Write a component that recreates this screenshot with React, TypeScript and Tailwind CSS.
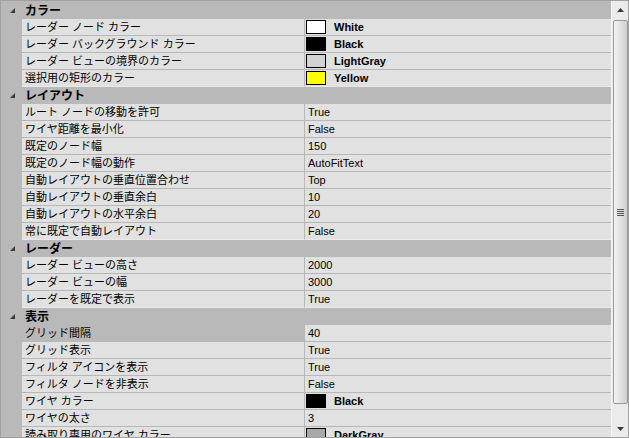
import React from 'react';

type Val = string | { color: string; label: string };
type Row = { name: string; value: Val; selected?: boolean };
type Section = { title: string; rows: Row[] };

const sections: Section[] = [
  {
    title: 'カラー',
    rows: [
      { name: 'レーダー ノード カラー', value: { color: '#ffffff', label: 'White' } },
      { name: 'レーダー バックグラウンド カラー', value: { color: '#000000', label: 'Black' } },
      { name: 'レーダー ビューの境界のカラー', value: { color: '#d3d3d3', label: 'LightGray' } },
      { name: '選択用の矩形のカラー', value: { color: '#ffff00', label: 'Yellow' } },
    ],
  },
  {
    title: 'レイアウト',
    rows: [
      { name: 'ルート ノードの移動を許可', value: 'True' },
      { name: 'ワイヤ距離を最小化', value: 'False' },
      { name: '既定のノード幅', value: '150' },
      { name: '既定のノード幅の動作', value: 'AutoFitText' },
      { name: '自動レイアウトの垂直位置合わせ', value: 'Top' },
      { name: '自動レイアウトの垂直余白', value: '10' },
      { name: '自動レイアウトの水平余白', value: '20' },
      { name: '常に既定で自動レイアウト', value: 'False' },
    ],
  },
  {
    title: 'レーダー',
    rows: [
      { name: 'レーダー ビューの高さ', value: '2000' },
      { name: 'レーダー ビューの幅', value: '3000' },
      { name: 'レーダーを既定で表示', value: 'True' },
    ],
  },
  {
    title: '表示',
    rows: [
      { name: 'グリッド間隔', value: '40', selected: true },
      { name: 'グリッド表示', value: 'True' },
      { name: 'フィルタ アイコンを表示', value: 'True' },
      { name: 'フィルタ ノードを非表示', value: 'False' },
      { name: 'ワイヤ カラー', value: { color: '#000000', label: 'Black' } },
      { name: 'ワイヤの太さ', value: '3' },
      { name: '読み取り専用のワイヤ カラー', value: { color: '#a9a9a9', label: 'DarkGray' } },
    ],
  },
];

function Expander() {
  return (
    <svg width="5" height="5" viewBox="0 0 5 5" className="block">
      <polygon points="5,0 5,5 0,5" fill="#3c3c3c" />
    </svg>
  );
}

function PropRow({ row, last }: { row: Row; last: boolean }) {
  const line = last ? 'border-[#e9e9e9]' : 'border-[#b7b7b7]';
  const v = row.value;
  return (
    <div className="flex h-[17px] shrink-0">
      <div className="w-[21px] shrink-0 bg-[#b9b9b9]" />
      <div
        className={`w-[283px] shrink-0 border-b border-r border-r-[#b7b7b7] ${line} ${
          row.selected ? 'bg-[#b9b9b9] border-b-[#b9b9b9]' : 'bg-[#e1e1e1]'
        } flex items-center pl-[3px] text-[11px] text-black whitespace-nowrap overflow-hidden`}
      >
        {row.name}
      </div>
      <div
        className={`flex-1 border-b ${line} bg-[#e1e1e1] flex items-center text-[11px] text-black whitespace-nowrap overflow-hidden`}
      >
        {typeof v === 'string' ? (
          <span className="pl-[3px]">{v}</span>
        ) : (
          <>
            <span
              className="ml-[1px] w-[20px] h-[14px] border border-black shrink-0"
              style={{ backgroundColor: v.color }}
            />
            <span className="ml-[8px] font-bold">{v.label}</span>
          </>
        )}
      </div>
    </div>
  );
}

function Scrollbar() {
  return (
    <div className="w-[17px] shrink-0 bg-[#ebebeb] border-l border-[#f6f6f6] flex flex-col items-center">
      <div className="h-[18px] w-full flex items-center justify-center">
        <svg width="7" height="4" viewBox="0 0 7 4">
          <polygon points="3.5,0 7,4 0,4" fill="#3a3a3a" />
        </svg>
      </div>
      <div className="mt-[1px] h-[384px] w-[15px] rounded-[2px] border border-[#9a9a9a] bg-gradient-to-r from-[#f3f3f3] via-[#e2e2e2] to-[#cfcfcf] flex items-center justify-center">
        <div className="flex flex-col gap-[1px]">
          <div className="w-[7px] h-[1px] bg-[#555]" />
          <div className="w-[7px] h-[1px] bg-[#555]" />
          <div className="w-[7px] h-[1px] bg-[#555]" />
          <div className="w-[7px] h-[1px] bg-[#555]" />
        </div>
      </div>
      <div className="flex-1" />
      <div className="h-[17px] w-full flex items-center justify-center">
        <svg width="7" height="4" viewBox="0 0 7 4">
          <polygon points="0,0 7,0 3.5,4" fill="#3a3a3a" />
        </svg>
      </div>
    </div>
  );
}

export default function App() {
  return (
    <div
      className="w-[629px] h-[438px] border border-[#a0a0a0] flex overflow-hidden bg-[#e1e1e1]"
      style={{ fontFamily: '"Liberation Sans", "Noto Sans CJK JP", sans-serif' }}
    >
      <div className="flex-1 flex flex-col overflow-hidden bg-[#b9b9b9] pt-[1px]">
        {sections.map((s) => (
          <div key={s.title} className="flex flex-col shrink-0">
            <div className="h-[17px] shrink-0 bg-[#b9b9b9] flex items-center">
              <div className="ml-[9px]">
                <Expander />
              </div>
              <span className="ml-[10px] text-[12px] font-bold text-black">{s.title}</span>
            </div>
            {s.rows.map((r, i) => (
              <PropRow key={r.name} row={r} last={i === s.rows.length - 1} />
            ))}
          </div>
        ))}
      </div>
      <Scrollbar />
    </div>
  );
}
